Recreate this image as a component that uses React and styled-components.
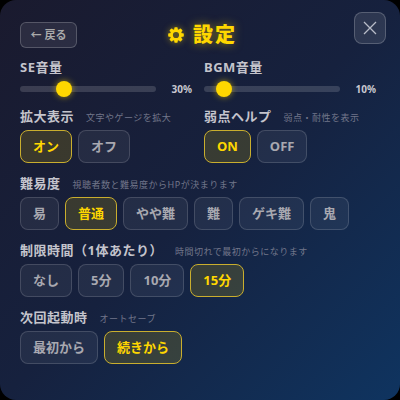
import React from "react";
import styled, { createGlobalStyle } from "styled-components";

const Global = createGlobalStyle`
  html, body { margin: 0; padding: 0; background: #000; width: 400px; height: 400px; overflow: hidden; }
  #root { width: 400px; height: 400px; }
  * { box-sizing: border-box; }
`;

const FONT = `"Noto Sans", "Noto Sans CJK JP", sans-serif`;

const Panel = styled.div`
  position: relative;
  width: 400px;
  height: 400px;
  padding: 22px 20px 20px;
  border-radius: 16px;
  background: linear-gradient(135deg, #1a1a2e 0%, #16213e 50%, #0f3460 100%);
  font-family: ${FONT};
  color: #c8c8d0;
`;

const Header = styled.div`
  position: relative;
  display: flex;
  align-items: center;
  height: 26px;
  margin-bottom: 9px;
`;

const BackButton = styled.button`
  width: 57px;
  height: 26px;
  padding: 0;
  border: 1px solid rgba(255, 255, 255, 0.2);
  border-radius: 6px;
  background: rgba(255, 255, 255, 0.08);
  color: #aaa;
  font: 700 11px/14px ${FONT};
`;

const Title = styled.h1`
  position: absolute;
  left: 0;
  right: 0;
  top: 0;
  height: 26px;
  margin: 0;
  padding-left: 5px;
  display: flex;
  align-items: center;
  justify-content: center;
  gap: 9px;
  color: #ffd700;
  font-size: 20px;
  line-height: 26px;
  font-weight: 900;
  letter-spacing: 2px;
  text-shadow: 0 0 10px rgba(255, 215, 0, 0.5);
  pointer-events: none;
`;

const CloseButton = styled.button`
  position: absolute;
  top: 12px;
  right: 14px;
  width: 32px;
  height: 32px;
  padding: 0;
  display: flex;
  align-items: center;
  justify-content: center;
  border: 1px solid rgba(255, 255, 255, 0.2);
  border-radius: 8px;
  background: rgba(255, 255, 255, 0.1);
`;

const Columns = styled.div`
  display: grid;
  grid-template-columns: 172px 172px;
  column-gap: 12px;
`;

const Section = styled.div`
  margin-bottom: ${(p) => p.$mb ?? 10}px;
`;

const LabelRow = styled.div`
  display: flex;
  align-items: baseline;
  gap: 12px;
  height: 20px;
  margin-bottom: ${(p) => p.$mb ?? 4}px;
  white-space: nowrap;
`;

const Label = styled.span`
  font-size: 13px;
  line-height: 20px;
  font-weight: 700;
  letter-spacing: 0.5px;
  color: #c4c4cc;
`;

const Hint = styled.span`
  font-size: 9px;
  line-height: 20px;
  font-weight: 400;
  letter-spacing: 0.5px;
  color: #72768a;
`;

const SliderRow = styled.div`
  display: flex;
  align-items: center;
  justify-content: space-between;
  height: 16px;
`;

const Track = styled.div`
  position: relative;
  width: 136px;
  height: 6px;
  border-radius: 3px;
  background: rgba(255, 255, 255, 0.15);
`;

const Thumb = styled.div`
  position: absolute;
  top: -5px;
  width: 16px;
  height: 16px;
  border-radius: 50%;
  background: #ffd700;
  box-shadow: 0 0 6px rgba(255, 215, 0, 0.6);
`;

const Value = styled.span`
  font-size: 10px;
  line-height: 16px;
  font-weight: 700;
  color: #c8c8d0;
`;

const Options = styled.div`
  display: flex;
  gap: 6px;
`;

const Option = styled.button`
  height: 33px;
  padding: 0 12px;
  border: 1px solid ${(p) => (p.$on ? "#c9ae2e" : "rgba(255, 255, 255, 0.15)")};
  border-radius: 8px;
  background: ${(p) => (p.$on ? "rgba(255, 215, 0, 0.15)" : "rgba(255, 255, 255, 0.06)")};
  color: ${(p) => (p.$on ? "#ffd700" : "#a8a8b0")};
  font: 700 13px/15px ${FONT};
`;

const Gear = () => (
  <svg width="16" height="16" viewBox="0 0 16 16" style={{ filter: "drop-shadow(0 0 3px rgba(255,215,0,.5))" }}>
    <mask id="gearHole">
      <rect width="16" height="16" fill="#fff" />
      <circle cx="8" cy="8" r="3.1" fill="#000" />
    </mask>
    <g fill="#ffd700" mask="url(#gearHole)">
      <circle cx="8" cy="8" r="6" />
      {[0, 45, 90, 135].map((a) => (
        <rect key={a} x="6.3" y="0.2" width="3.4" height="15.6" rx="0.8" transform={`rotate(${a} 8 8)`} />
      ))}
    </g>
  </svg>
);

const Slider = ({ label, value, left }) => (
  <Section $mb={9}>
    <LabelRow $mb={4}><Label>{label}</Label></LabelRow>
    <SliderRow>
      <Track><Thumb style={{ left }} /></Track>
      <Value>{value}%</Value>
    </SliderRow>
  </Section>
);

const Group = ({ label, hint, items, on, mb }) => (
  <Section $mb={mb}>
    <LabelRow><Label>{label}</Label><Hint>{hint}</Hint></LabelRow>
    <Options>
      {items.map((i) => <Option key={i} $on={i === on}>{i}</Option>)}
    </Options>
  </Section>
);

export default function App() {
  return (
    <>
      <Global />
      <Panel>
        <CloseButton aria-label="close">
          <svg width="16" height="16" viewBox="0 0 16 16" stroke="#b8bcc8" strokeWidth="1.3" fill="none"><path d="M2 2l12 12M14 2L2 14" /></svg>
        </CloseButton>
        <Header>
          <BackButton>← 戻る</BackButton>
          <Title><Gear /><span>設定</span></Title>
        </Header>
        <Columns>
          <Slider label="SE音量" value={30} left={36} />
          <Slider label="BGM音量" value={10} left={12} />
          <Group label="拡大表示" hint="文字やゲージを拡大" items={["オン", "オフ"]} on="オン" />
          <Group label="弱点ヘルプ" hint="弱点・耐性を表示" items={["ON", "OFF"]} on="ON" />
        </Columns>
        <Group label="難易度" hint="視聴者数と難易度からHPが決まります" items={["易", "普通", "やや難", "難", "ゲキ難", "鬼"]} on="普通" />
        <Group label="制限時間（1体あたり）" hint="時間切れで最初からになります" items={["なし", "5分", "10分", "15分"]} on="15分" />
        <Group label="次回起動時" hint="オートセーブ" items={["最初から", "続きから"]} on="続きから" />
      </Panel>
    </>
  );
}
